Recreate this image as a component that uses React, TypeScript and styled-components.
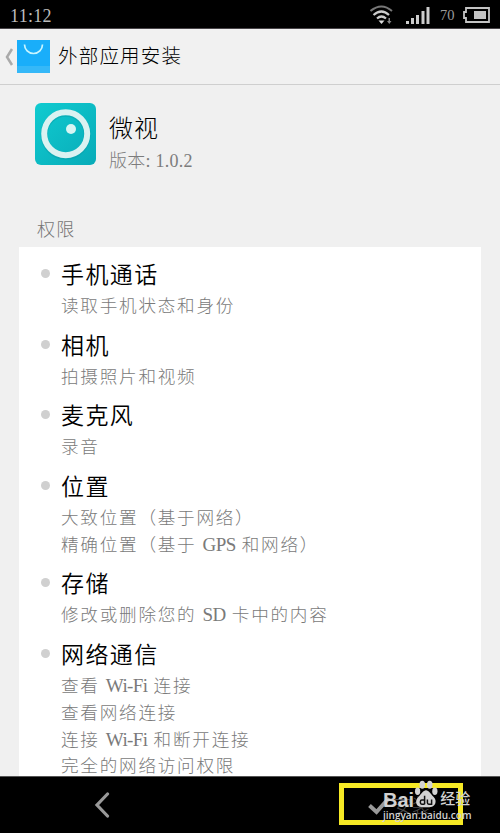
import React from "react";
import styled, { createGlobalStyle } from "styled-components";

const GlobalStyle = createGlobalStyle`
  * { box-sizing: border-box; }
  html, body { margin: 0; padding: 0; background: #f0f0f0; }
`;

const Screen = styled.div`
  width: 500px;
  height: 833px;
  display: flex;
  flex-direction: column;
  overflow: hidden;
  background: #f0f0f0;
  font-family: "Liberation Serif", "Noto Sans CJK SC", serif;
  font-weight: 300;
  white-space: nowrap;
`;

const StatusBar = styled.header`
  height: 29px;
  flex: none;
  display: flex;
  align-items: center;
  justify-content: space-between;
  padding: 2px 10px 0 10px;
  background: #000;
  border-bottom: 1px solid #484448;
  color: #bcbcbc;
`;

const Clock = styled.span`
  padding-top: 2px;
  font-size: 18px;
  letter-spacing: 0.3px;
  line-height: 24px;
`;

const StatusIcons = styled.div`
  display: flex;
  align-items: center;
`;

const SignalIcon = styled.svg`
  margin-left: 12px;
`;

const BatteryLevel = styled.span`
  width: 16px;
  margin: 1px 7px 0 10px;
  font-size: 14.5px;
  color: #9c9c9c;
`;

const TitleBar = styled.div`
  height: 56px;
  flex: none;
  display: flex;
  align-items: center;
  padding-left: 5px;
  background: #f1f1f1;
  border-bottom: 1px solid #cfcfcf;
`;

const StoreIcon = styled.svg`
  margin: 0 8px 0 3px;
`;

const PageTitle = styled.h1`
  margin: 0;
  font-size: 19.5px;
  font-weight: 300;
  letter-spacing: 1.2px;
  line-height: 30px;
  color: #000;
`;

const AppSummary = styled.section`
  height: 120px;
  flex: none;
  display: flex;
  padding: 18px 0 0 35px;
`;

const AppText = styled.div`
  padding: 9px 0 0 13px;
`;

const AppName = styled.h2`
  margin: 0;
  font-size: 24px;
  font-weight: 300;
  letter-spacing: 1px;
  line-height: 34px;
  color: #000;
`;

const Version = styled.div`
  font-size: 18px;
  letter-spacing: 0.25px;
  line-height: 30px;
  color: #7c7c7c;
`;

const SectionLabel = styled.div`
  height: 42px;
  flex: none;
  padding: 10px 0 0 37px;
  font-size: 18px;
  letter-spacing: 1.3px;
  line-height: 30px;
  color: #757575;
`;

const PermissionCard = styled.main`
  flex: 1;
  min-height: 0;
  overflow: hidden;
  margin: 0 19px;
  padding-top: 14px;
  background: #fff;
`;

const Permission = styled.section`
  display: grid;
  grid-template-columns: 42px 1fr;
  margin-bottom: 15px;
`;

const Bullet = styled.i`
  width: 9px;
  height: 9px;
  margin: 8px 0 0 22px;
  border-radius: 50%;
  background: #d0d0d0;
`;

const PermissionName = styled.h3`
  margin: 0;
  height: 29px;
  font-size: 23px;
  font-weight: 350;
  letter-spacing: 1.4px;
  line-height: 29px;
  color: #000;
`;

const Detail = styled.div`
  height: 26.7px;
  font-size: 17.6px;
  letter-spacing: 1.75px;
  line-height: 32px;
  color: #7a7a7a;
`;

const Latin = styled.span`
  font-size: 19px;
  letter-spacing: -0.6px;
  line-height: 1;
`;

const BottomBar = styled.footer`
  position: relative;
  height: 57px;
  flex: none;
  display: flex;
  align-items: center;
  padding: 0 37px 0 94px;
  justify-content: space-between;
  background: #000;
  border-top: 1px solid #555;
`;

const InstallButton = styled.div`
  width: 124px;
  height: 42px;
  margin-top: -2px;
  display: flex;
  align-items: center;
  padding-left: 24px;
  border: 5px solid #f6e925;
`;

const CheckIcon = styled.svg`
  flex: none;
  margin-top: 3px;
`;

const InstallLabel = styled.span`
  margin-left: 2px;
  font-size: 19px;
  color: #4c4c4c;
`;

const Watermark = styled.div`
  position: absolute;
  left: 383px;
  top: 1px;
  width: 90px;
  color: #d2d2d2;
  font-family: "Liberation Sans", "Noto Sans CJK SC", sans-serif;
`;

const Brand = styled.div`
  display: flex;
  align-items: flex-end;
  height: 31px;
  font-weight: 700;
  font-size: 20px;
  line-height: 18px;
`;

const Paw = styled.svg`
  flex: none;
  margin: 0 1px 1px -1px;
`;

const BrandSuffix = styled.span`
  font-size: 15px;
  font-weight: 500;
  line-height: 20px;
`;

const Site = styled.div`
  font-family: "Open Sans", sans-serif;
  font-size: 10px;
  font-weight: 600;
  line-height: 13px;
`;

const permissions = [
  { name: "手机通话", details: ["读取手机状态和身份"] },
  { name: "相机", details: ["拍摄照片和视频"] },
  { name: "麦克风", details: ["录音"] },
  { name: "位置", details: ["大致位置（基于网络）", "精确位置（基于 GPS 和网络）"] },
  { name: "存储", details: ["修改或删除您的 SD 卡中的内容"] },
  {
    name: "网络通信",
    details: ["查看 Wi-Fi 连接", "查看网络连接", "连接 Wi-Fi 和断开连接", "完全的网络访问权限"],
  },
];

const mixedText = (text: string) =>
  text
    .split(/([A-Za-z-]+)/)
    .map((part, i) => (i % 2 ? <Latin key={i}>{part}</Latin> : part));

export default function App() {
  return (
    <Screen>
      <GlobalStyle />
      <StatusBar>
        <Clock>11:12</Clock>
        <StatusIcons>
          <svg width="24" height="20" viewBox="0 0 24 20" fill="none" strokeWidth="2">
            <path d="M.5 6Q11.500 -3 22 6" stroke="#777" />
            <path d="M3.500 10Q11.500 3 19 10M7 13.500Q11.500 9.500 16 13.500" stroke="#ccc" strokeWidth="2.200" />
            <path d="M8.500 15.500h6l-3 3.500z" fill="#ddd" />
            <path d="M18.500 13h1.500v3h1.500l-2.250 3-2.250-3h1.500z" fill="#888" />
          </svg>
          <SignalIcon width="24" height="20" viewBox="0 0 24 20" fill="#ccc">
            <path d="M0 16h3v3H0zM5 13h3v6H5zM10 10h3v9h-3zM15.500 6h3v13h-3zM20.500 2h3v17h-3z" />
          </SignalIcon>
          <BatteryLevel>70</BatteryLevel>
          <svg width="27" height="16" viewBox="0 0 27 16">
            <path d="M3 1h23v14H3v-4H1V5h2z" fill="none" stroke="#c4c4c4" strokeWidth="1.800" />
            <path d="M11 4h12v8H11z" fill="#c4c4c4" />
          </svg>
        </StatusIcons>
      </StatusBar>
      <TitleBar>
        <svg width="9" height="18" viewBox="0 0 9 18">
          <path d="M7 1L2 9l5 8" fill="none" stroke="#aaa" strokeWidth="2.500" />
        </svg>
        <StoreIcon width="33" height="33" viewBox="0 0 33 33">
          <path d="M0 0h33v33H0z" fill="#19aefa" />
          <path d="M0 26h33v7H0z" fill="#35b8f8" />
          <path d="M7.500 4.500a9 9 0 0 0 18 0" fill="none" stroke="#c8f5ff" strokeWidth="1.700" />
        </StoreIcon>
        <PageTitle>外部应用安装</PageTitle>
      </TitleBar>
      <AppSummary>
        <svg width="61" height="62" viewBox="0 0 61 62">
          <defs>
            <linearGradient id="teal" x1="0" y1="0" x2="1" y2="1">
              <stop stopColor="#10cbd0" />
              <stop offset="1" stopColor="#08abb8" />
            </linearGradient>
          </defs>
          <rect width="61" height="62" rx="6" fill="url(#teal)" />
          <circle cx="30.700" cy="31.700" r="21.500" fill="none" stroke="#0799a2" strokeWidth="7" opacity=".4" />
          <circle cx="30.700" cy="30.700" r="21.500" fill="none" stroke="#daf2f1" strokeWidth="6" />
          <circle cx="36" cy="26" r="5" fill="#d8f5f3" />
        </svg>
        <AppText>
          <AppName>微视</AppName>
          <Version>版本: 1.0.2</Version>
        </AppText>
      </AppSummary>
      <SectionLabel>权限</SectionLabel>
      <PermissionCard>
        {permissions.map((item) => (
          <Permission key={item.name}>
            <Bullet />
            <div>
              <PermissionName>{item.name}</PermissionName>
              {item.details.map((line) => (
                <Detail key={line}>{mixedText(line)}</Detail>
              ))}
            </div>
          </Permission>
        ))}
      </PermissionCard>
      <BottomBar>
        <svg width="17" height="26" viewBox="0 0 17 26">
          <path d="M13.500 2L3 13l10.500 11" fill="none" stroke="#999" strokeWidth="3.200" strokeLinecap="round" />
        </svg>
        <InstallButton>
          <CheckIcon width="23" height="20" viewBox="0 0 23 20">
            <path d="M1.500 9.500l7 6.500L21 2" fill="none" stroke="#999" strokeWidth="4" />
          </CheckIcon>
          <InstallLabel>安装</InstallLabel>
        </InstallButton>
        <Watermark>
          <Brand>
            Bai
            <Paw width="26" height="28" viewBox="0 0 26 30" fill="#d2d2d2">
              <ellipse cx="4" cy="12" rx="2.800" ry="4" />
              <ellipse cx="9" cy="5" rx="3" ry="4.300" />
              <ellipse cx="17" cy="5" rx="3" ry="4.300" />
              <ellipse cx="22.500" cy="12" rx="2.800" ry="4" />
              <path d="M13 11c3 0 5 4 8 7 5 5 1 11-3 11H8c-5 0-8-6-3-11 3-3 5-7 8-7z" />
              <path
                d="M11.500 17v9M11.500 21.500H8.500q-1.500 0-1.500 1.500v1.500q0 1.500 1.500 1.500h3M14.500 21v3.500q0 1.500 1.500 1.500h3v-5"
                fill="none"
                stroke="#111"
                strokeWidth="1.600"
              />
            </Paw>
            <BrandSuffix>经验</BrandSuffix>
          </Brand>
          <Site>jingyan.baidu.com</Site>
        </Watermark>
      </BottomBar>
    </Screen>
  );
}
